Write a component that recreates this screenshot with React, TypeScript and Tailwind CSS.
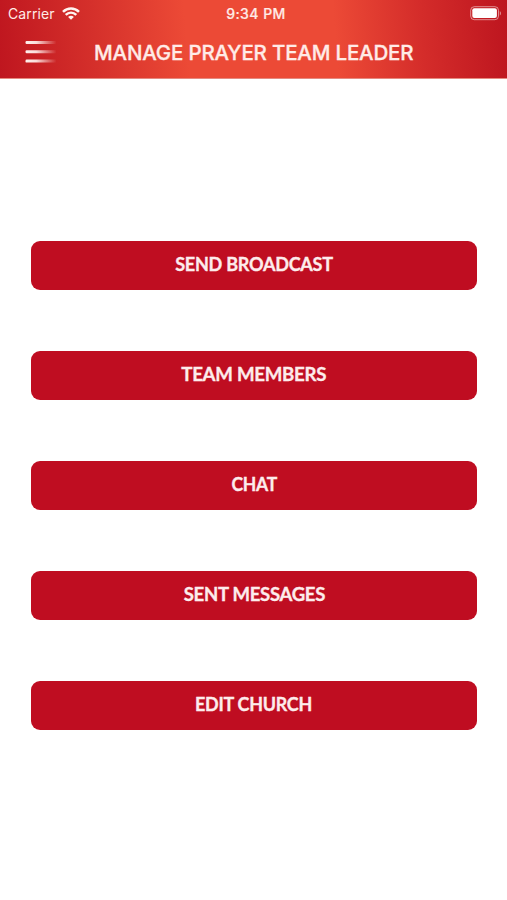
import React from 'react';

const actions = [
  { label: 'SEND BROADCAST', fit: 'scale-x-[0.927]' },
  { label: 'TEAM MEMBERS', fit: 'scale-x-[0.957]' },
  { label: 'CHAT', fit: 'scale-x-[0.9]' },
  { label: 'SENT MESSAGES', fit: 'scale-x-[0.95]' },
  { label: 'EDIT CHURCH', fit: 'scale-x-[0.92]' },
];

const WifiIcon: React.FC = () => (
  <svg width="18" height="13" viewBox="0 0 18 13" fill="none" stroke="#fff4f0" strokeWidth="2.5">
    <path d="M1 4.8 C5.6 .3 12.4 .3 17 4.8" />
    <path d="M3.7 7.9 C6.8 5 11.2 5 14.3 7.9" />
    <path d="M9 12.8 L6.1 9.9 C7.8 8.3 10.2 8.3 11.9 9.9 Z" fill="#fff4f0" stroke="none" />
  </svg>
);

const BatteryIcon: React.FC = () => (
  <svg width="32" height="15" viewBox="0 0 32 15" fill="none">
    <rect x="0.7" y="0.7" width="27.8" height="13" rx="3.6" stroke="#fff" strokeOpacity="0.5" />
    <rect x="2.3" y="2.3" width="24.6" height="9.8" rx="2" fill="#fff" />
    <path d="M29.8 5 C31.4 5.8 31.4 8.8 29.8 9.6 Z" fill="#fff" fillOpacity="0.5" />
  </svg>
);

const MenuIcon: React.FC = () => (
  <svg width="32" height="24" viewBox="0 0 32 24">
    <defs>
      <linearGradient id="menuFade" x1="0" y1="0" x2="1" y2="0">
        <stop offset="0" stopColor="#fff1ee" />
        <stop offset="0.35" stopColor="#fff1ee" stopOpacity="0.9" />
        <stop offset="1" stopColor="#fff1ee" stopOpacity="0" />
      </linearGradient>
    </defs>
    <rect x="0.5" y="1" width="31" height="3" rx="1.2" fill="url(#menuFade)" />
    <rect x="0.5" y="10.3" width="31" height="3" rx="1.2" fill="url(#menuFade)" />
    <rect x="0.5" y="19.6" width="31" height="3" rx="1.2" fill="url(#menuFade)" />
  </svg>
);

const Header: React.FC = () => (
  <header className="h-[79px] border-b border-[#e58a80] bg-[linear-gradient(85deg,#bf161f_0%,#d5302b_19%,#ec4a36_37%,#ec4a36_66%,#d42c2a_83%,#bd151f_100%)] font-[Inter,sans-serif] text-[#ffebe7]">
    {/* Status bar */}
    <div className="grid h-[27px] grid-cols-3 items-center pl-2 pr-[5px]">
      <div className="flex items-center gap-[7px]">
        <span className="text-[14px] leading-none tracking-[0.1px]">Carrier</span>
        <WifiIcon />
      </div>
      <span className="pl-[2px] text-center text-[14px] font-medium leading-none tracking-[0.45px] [-webkit-text-stroke:0.2px_#ffebe7]">
        9:34 PM
      </span>
      <div className="flex justify-end">
        <BatteryIcon />
      </div>
    </div>

    {/* Title bar */}
    <div className="flex h-[50px] items-center pl-[25px]">
      <button aria-label="Menu">
        <MenuIcon />
      </button>
      <h1 className="ml-[37px] whitespace-nowrap pt-px text-[20.5px] font-medium leading-7 tracking-[-0.18px] [-webkit-text-stroke:0.3px_#ffebe7]">
        MANAGE PRAYER TEAM LEADER
      </h1>
    </div>
  </header>
);

export default function App() {
  return (
    <div className="min-h-[900px] w-full bg-white">
      <Header />
      <main className="flex flex-col gap-[61px] pl-[31px] pr-[30px] pt-[162px]">
        {actions.map(({ label, fit }) => (
          <button
            key={label}
            className="flex h-[49px] items-center justify-center rounded-[9px] bg-[#bf0d21] pb-[3px] font-[Lato,sans-serif] text-[19.5px] font-bold leading-6 tracking-[-0.3px] text-[#fdecec] [-webkit-text-stroke:0.35px_#fdecec]"
          >
            <span className={fit}>{label}</span>
          </button>
        ))}
      </main>
    </div>
  );
}
